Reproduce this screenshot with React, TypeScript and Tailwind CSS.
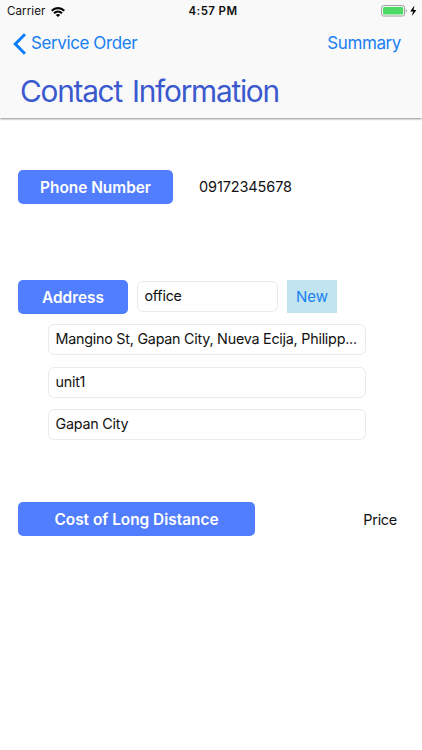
interface LabelProps {
    text: string;
    className: string;
}

interface FieldProps {
    value: string;
    className: string;
}

function Label({ text, className }: LabelProps) {
    return (
        <div className={`flex items-center justify-center rounded-[5px] bg-[#517dff] pt-px text-[15.4px] font-semibold text-white ${className}`}>
            {text}
        </div>
    );
}

function Field({ value, className }: FieldProps) {
    return (
        <div className={`flex items-center whitespace-nowrap rounded-[6px] border border-[#ebebeb] bg-white px-[6.5px] pb-px text-[14.3px] tracking-[-0.23px] text-[#111111] ${className}`}>
            {value}
        </div>
    );
}

function WifiIcon() {
    return (
        <svg width="14" height="10" viewBox="0 0 14 10" fill="none" stroke="#000000" strokeWidth="2.1">
            <path d="M0.7 3.7 C4.3 0.3 9.7 0.3 13.3 3.7" />
            <path d="M3 6.2 C5.3 4.1 8.7 4.1 11 6.2" />
            <path d="M7 10 L4.8 7.9 C6.1 6.8 7.9 6.8 9.2 7.9 Z" fill="#000000" stroke="none" />
        </svg>
    );
}

function BatteryIcon() {
    return (
        <svg width="37" height="12" viewBox="0 0 37 12">
            <rect x="0.6" y="0.6" width="23" height="10.4" rx="2" fill="#ffffff" stroke="#9b9b9b" strokeWidth="1" />
            <rect x="2" y="2" width="20.2" height="7.6" rx="0.8" fill="#4cd964" />
            <path d="M24.8 4 C26.2 4.6 26.2 7 24.8 7.6 Z" fill="#9b9b9b" />
            <path d="M33.4 0.6 L29.2 6.4 H32 L31 11 L35.4 5 H32.6 Z" fill="#000000" />
        </svg>
    );
}

function StatusBar() {
    return (
        <div className="grid h-[22px] grid-cols-3 items-center pl-[8px] pr-1 text-[11.5px] text-[#111111]">
            <div className="-ml-px flex items-center gap-[6px] pt-px">
                <span className="tracking-[0.1px]">Carrier</span>
                <WifiIcon />
            </div>
            <div className="pt-px text-center font-semibold tracking-[0.4px]">4:57 PM</div>
            <div className="flex justify-end">
                <BatteryIcon />
            </div>
        </div>
    );
}

function Header() {
    return (
        <header className="h-[118px] bg-[#f9f9f9] shadow-[0_1px_2px_rgba(0,0,0,0.45)]">
            <StatusBar />
            <div className="flex h-[43px] items-center justify-between pl-[13px] pr-[21px] text-[17px] text-[#1880f0]">
                <button className="flex items-center gap-[5px]">
                    <svg width="13" height="22" viewBox="0 0 13 22" fill="none" stroke="#0a7cff" strokeWidth="3">
                        <path d="M12 1.2 L2.3 11 L12 20.8" />
                    </svg>
                    <span className="tracking-[-0.4px]">Service Order</span>
                </button>
                <button className="tracking-[-0.4px]">Summary</button>
            </div>
            <h1 className="pl-5 pt-1 text-[29.8px] leading-[44px] tracking-[-1.25px] [word-spacing:3px] text-[#3b59cf]">Contact Information</h1>
        </header>
    );
}

function App() {
    return (
        <div className="flex h-[750px] w-[422px] flex-col overflow-hidden bg-white font-['Inter','Liberation_Sans',sans-serif]">
            <Header />
            <main className="px-[18px] pt-[52px]">
                <section className="flex items-center">
                    <Label text="Phone Number" className="h-[34px] w-[155px]" />
                    <span className="ml-[26px] text-[14.5px] tracking-[-0.12px] text-[#111111]">09172345678</span>
                </section>
                <section className="mt-[76px]">
                    <div className="flex items-start">
                        <Label text="Address" className="h-[34px] w-[110px]" />
                        <Field value="office" className="ml-[9px] mt-px h-[31px] w-[141px]" />
                        <button className="ml-[9px] h-[33px] w-[50px] bg-[#c2e4f0] pt-[2px] text-[15px] text-[#1880f0]">New</button>
                    </div>
                    <div className="ml-[30px] mt-[10px] flex w-[318px] flex-col gap-[11.5px]">
                        <Field value="Mangino St, Gapan City, Nueva Ecija, Philipp..." className="h-[31px]" />
                        <Field value="unit1" className="h-[31px]" />
                        <Field value="Gapan City" className="h-[31px]" />
                    </div>
                </section>
                <section className="mt-[62px] flex items-center justify-between">
                    <Label text="Cost of Long Distance" className="h-[34px] w-[237px]" />
                    <span className="mr-[7px] pt-px text-[14.5px] tracking-[-0.3px] text-[#111111]">Price</span>
                </section>
            </main>
        </div>
    );
}

export default App;
